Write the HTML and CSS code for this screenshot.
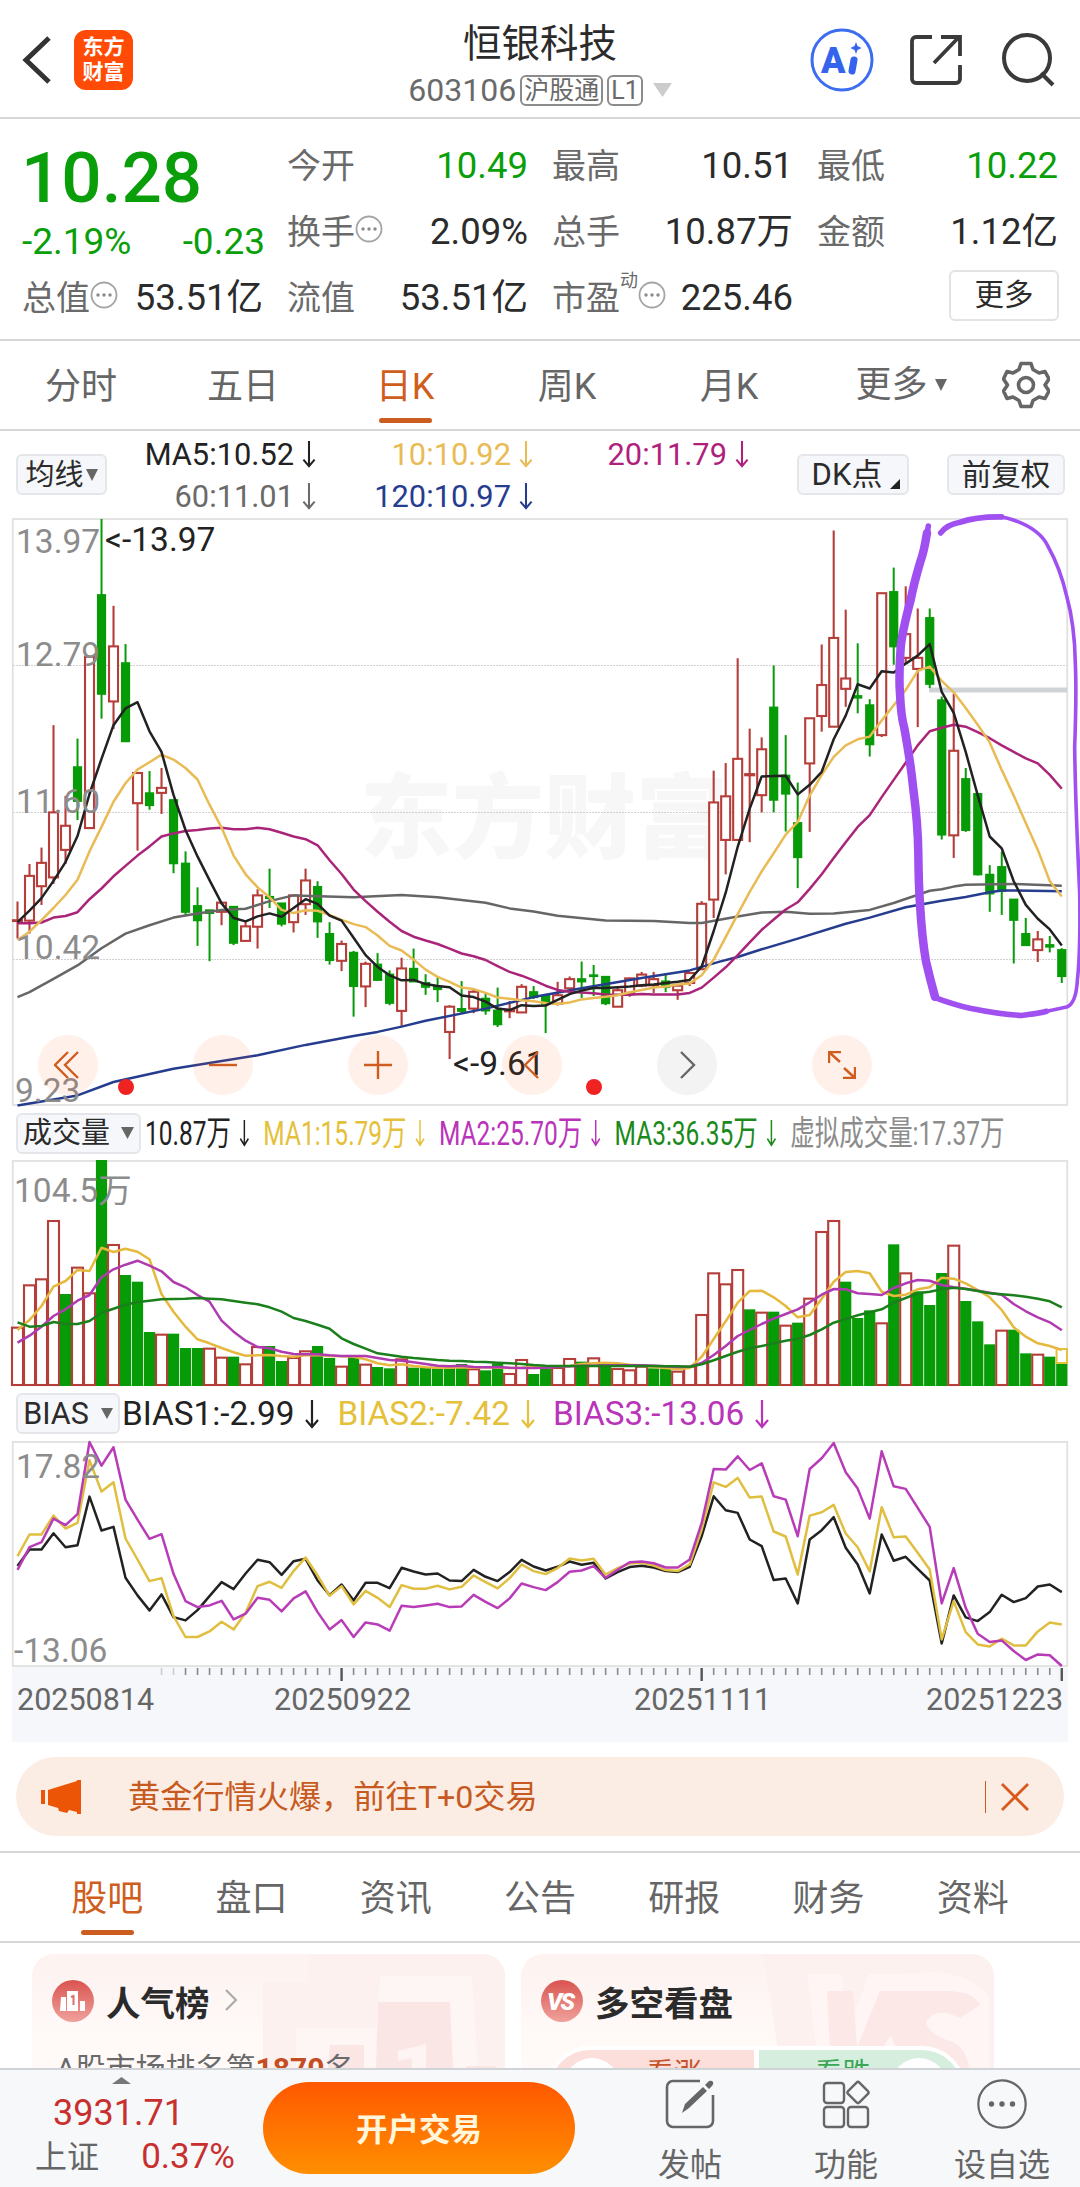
FILE: index.html
```html
<!DOCTYPE html>
<html lang="zh-CN">
<head>
    <meta charset="UTF-8">
    <meta name="viewport" content="width=device-width, initial-scale=1.0">
    <title>恒银科技 603106</title>
    <link rel="stylesheet" href="styles.css">
</head>
<body>
    <svg class="sprite" width="0" height="0">
        <symbol id="down" viewBox="0 0 14 30"><path d="M7 1v27M1 21l6 7 6-7" fill="none" stroke="currentColor" stroke-width="2.2"/></symbol>
        <symbol id="tri" viewBox="0 0 14 12" preserveAspectRatio="none"><path d="M0 0h14L7 12z" fill="currentColor"/></symbol>
        <symbol id="dots" viewBox="0 0 28 28">
            <circle cx="14" cy="14" r="12.5" fill="none" stroke="#a5a5a5" stroke-width="1.8"/>
            <g fill="#8a8a8a"><circle cx="8" cy="14" r="1.7"/><circle cx="14" cy="14" r="1.7"/><circle cx="20" cy="14" r="1.7"/></g>
        </symbol>
    </svg>

    <header class="header">
        <div class="header-left">
            <svg class="back" width="30" height="50" viewBox="0 0 30 50"><path d="M27 3L4 25l23 22" fill="none" stroke="#333" stroke-width="5"/></svg>
            <div class="logo"><span>东方</span><span>财富</span></div>
        </div>
        <div class="stock">
            <div class="stock-name">恒银科技</div>
            <div class="stock-code">603106<span class="tag">沪股通</span><span class="tag">L1</span><svg class="code-tri" width="19" height="14"><use href="#tri"/></svg></div>
        </div>
        <div class="header-right">
            <svg class="ai-icon" width="64" height="64" viewBox="0 0 64 64">
                <circle cx="32" cy="32" r="30" fill="#fff" stroke="#3c6cf0" stroke-width="3"/>
                <text class="ai" x="11" y="45">A</text>
                <path d="M44 32l-2 11" stroke="#3563ee" stroke-width="7" stroke-linecap="round"/>
                <path d="M46 14l1.500 4 4 2-4 2-1.500 4-1.500-4-4-2 4-2z" fill="#3563ee"/>
            </svg>
            <svg width="52" height="52" viewBox="0 0 52 52" fill="none" stroke="#3a3a3a" stroke-width="3.800">
                <path d="M22 3H6a4 4 0 0 0-4 4v38a4 4 0 0 0 4 4h40a4 4 0 0 0 4-4V31"/>
                <path d="M24 29L49 3M31 3h19v19"/>
            </svg>
            <svg width="54" height="54" viewBox="0 0 54 54" fill="none" stroke="#3a3a3a" stroke-width="4">
                <circle cx="26" cy="25" r="23"/><path d="M40 40l12 12"/>
            </svg>
        </div>
    </header>

    <section class="quote">
        <div class="price-box">
            <div class="price">10.28</div>
            <div class="change"><span>-2.19%</span><span>-0.23</span></div>
        </div>
        <div class="item"><span class="label">今开</span><span class="value green">10.49</span></div>
        <div class="item"><span class="label">最高</span><span class="value">10.51</span></div>
        <div class="item"><span class="label">最低</span><span class="value green">10.22</span></div>
        <div class="item"><span class="label">换手<svg class="info" width="28" height="28"><use href="#dots"/></svg></span><span class="value">2.09%</span></div>
        <div class="item"><span class="label">总手</span><span class="value">10.87万</span></div>
        <div class="item"><span class="label">金额</span><span class="value">1.12亿</span></div>
        <div class="item"><span class="label">总值<svg class="info" width="28" height="28"><use href="#dots"/></svg></span><span class="value">53.51亿</span></div>
        <div class="item"><span class="label">流值</span><span class="value">53.51亿</span></div>
        <div class="item"><span class="label">市盈<sup>动</sup><svg class="info" width="28" height="28"><use href="#dots"/></svg></span><span class="value">225.46</span></div>
        <div class="item end"><button class="more">更多</button></div>
    </section>

    <nav class="period">
        <span>分时</span>
        <span>五日</span>
        <span class="active">日K</span>
        <span>周K</span>
        <span>月K</span>
        <span class="period-more">更多<svg width="12" height="12"><use href="#tri"/></svg></span>
        <svg class="gear" width="48" height="48" viewBox="0 0 48 48" fill="none" stroke="#666" stroke-width="3.600" stroke-linejoin="round">
            <path d="M19 2.500h10l2 6 6 3.500 6-1.500 4 7.500-4 6 4 6-4 7.500-6-1.500-6 3.500-2 6H19l-2-6-6-3.500-6 1.500L1.500 30l4-6-4-6L5 10.500l6 1.500 6-3.500z"/>
            <circle cx="24" cy="24" r="7.500"/>
        </svg>
    </nav>

    <div class="ma-bar">
        <button class="chip">均线<svg width="12" height="12"><use href="#tri"/></svg></button>
        <div class="ma-grid">
            <span class="c-black">MA5:10.52<svg class="arrow"><use href="#down"/></svg></span>
            <span class="c-gold">10:10.92<svg class="arrow"><use href="#down"/></svg></span>
            <span class="c-rose">20:11.79<svg class="arrow"><use href="#down"/></svg></span>
            <span class="c-gray">60:11.01<svg class="arrow"><use href="#down"/></svg></span>
            <span class="c-blue">120:10.97<svg class="arrow"><use href="#down"/></svg></span>
        </div>
        <button class="chip chip-dk">DK点<svg width="10" height="10" viewBox="0 0 10 10"><path d="M10 0v10H0z" fill="#222"/></svg></button>
        <button class="chip chip-fq">前复权</button>
    </div>

    <div class="k-chart">
        <svg class="chart" width="1080" height="588" viewBox="0 0 1080 588">
            <text class="watermark" x="360" y="333">东方财富</text>
            <g class="grid">
                <path d="M13 147.500H1067M13 294.500H1067M13 441.500H1067"/>
            </g>
            <rect class="frame" x="12.750" y="1" width="1054.500" height="586"/>
            <rect x="929" y="169.500" width="138" height="5" fill="#cfd3d5"/>
            <g id="candles"></g>
            <g class="axis">
                <text x="16" y="35">13.97</text>
                <text x="16" y="148">12.79</text>
                <text x="16" y="295">11.60</text>
                <text x="16" y="441">10.42</text>
                <text x="15" y="584">9.23</text>
            </g>
            <text class="mark" x="105" y="33">&lt;-13.97</text>
            <text class="mark" x="453" y="557">&lt;-9.61</text>
            <circle cx="126" cy="569" r="8" fill="#f02323"/>
            <circle cx="594" cy="569" r="8" fill="#f02323"/>
            <!-- hand-drawn circle around the latest drop -->
            <g class="pen" transform="translate(700 -8) scale(.33333 .38266)">
                <path class="pen-thick" d="M681 60Q672 110 661 135Q642 190 632 235Q606 320 602 360Q596 440 600 480Q603 540 613 570Q632 660 640 730Q654 820 655 900Q656 980 660 1030Q666 1120 678 1180Q690 1225 705 1272"/>
                <path class="pen-mid" d="M685 42L676 90M705 1274Q760 1292 810 1302Q900 1318 965 1321Q1020 1315 1040 1310M722 60Q740 38 780 32Q830 17 905 18"/>
                <path class="pen-thin" d="M1030 1312L1100 1299Q1128 1290 1132 1230Q1142 1150 1139 1000Q1126 760 1124 620Q1130 480 1126 400Q1124 300 1100 225Q1080 150 1044 95Q1020 50 940 26Q920 20 900 18"/>
            </g>
        </svg>
        <div class="tools">
            <i class="tool"><svg width="28" height="28" viewBox="0 0 28 28"><path d="M14 1L1 14l13 13M24 1L11 14l13 13"/></svg></i>
            <i class="tool"><svg width="28" height="28" viewBox="0 0 28 28"><path d="M0 14h28"/></svg></i>
            <i class="tool"><svg width="28" height="28" viewBox="0 0 28 28"><path d="M0 14h28M14 0v28"/></svg></i>
            <i class="tool"><svg width="28" height="28" viewBox="0 0 28 28"><path d="M20 1L7 14l13 13"/></svg></i>
            <i class="tool gray"><svg width="28" height="28" viewBox="0 0 28 28"><path d="M8 1l13 13L8 27"/></svg></i>
            <i class="tool"><svg width="28" height="28" viewBox="0 0 28 28"><path d="M1 12V1h12M1 1l11 10M27 16v11H15M27 27L16 17"/></svg></i>
        </div>
    </div>

    <div class="legend">
        <button class="chip chip-vol">成交量<svg width="13" height="12"><use href="#tri"/></svg></button>
        <div class="legend-vol">
            <span class="c-black">10.87万<svg class="arrow"><use href="#down"/></svg></span>
            <span class="c-yellow">MA1:15.79万<svg class="arrow"><use href="#down"/></svg></span>
            <span class="c-purple">MA2:25.70万<svg class="arrow"><use href="#down"/></svg></span>
            <span class="c-green">MA3:36.35万<svg class="arrow"><use href="#down"/></svg></span>
            <span class="c-light">虚拟成交量:17.37万</span>
        </div>
    </div>

    <svg class="chart" width="1080" height="226" viewBox="0 0 1080 226">
        <rect class="frame" x="12.750" y="1" width="1054.500" height="224"/>
        <g id="volume"></g>
        <g class="axis"><text x="14" y="42">104.5万</text></g>
    </svg>

    <div class="legend legend-b">
        <button class="chip chip-bias">BIAS<svg width="12" height="11"><use href="#tri"/></svg></button>
        <div class="legend-bias">
            <span class="c-black">BIAS1:-2.99<svg class="arrow"><use href="#down"/></svg></span>
            <span class="c-yellow">BIAS2:-7.42<svg class="arrow"><use href="#down"/></svg></span>
            <span class="c-purple">BIAS3:-13.06<svg class="arrow"><use href="#down"/></svg></span>
        </div>
    </div>

    <svg class="chart" width="1080" height="226" viewBox="0 0 1080 226">
        <rect class="frame" x="12.750" y="1" width="1054.500" height="224"/>
        <g id="bias"></g>
        <g class="axis">
            <text x="16" y="37">17.82</text>
            <text x="14" y="221">-13.06</text>
        </g>
    </svg>

    <div class="dates">
        <svg id="ticks" width="1056" height="14" viewBox="12 0 1056 14"></svg>
        <div class="date-row">
            <span>20250814</span><span>20250922</span><span>20251111</span><span>20251223</span>
        </div>
    </div>

    <div class="banner">
        <svg width="42" height="36" viewBox="0 0 42 36"><path d="M1 11h4v14H1zM8 11L37 2V1h4v34h-4v-2l-8-2-2 3-8-2-1-3-10-3z" fill="#eb5505"/></svg>
        <span class="banner-text">黄金行情火爆，前往T+0交易</span>
        <i class="banner-line"></i>
        <svg width="30" height="30" viewBox="0 0 30 30"><path d="M2 2l26 26M28 2L2 28" stroke="#d9591b" stroke-width="2.800"/></svg>
    </div>

    <nav class="tabs">
        <span class="active">股吧</span>
        <span>盘口</span>
        <span>资讯</span>
        <span>公告</span>
        <span>研报</span>
        <span>财务</span>
        <span>资料</span>
    </nav>

    <div class="cards">
        <div class="card">
            <svg class="card-bg" width="473" height="114" viewBox="0 0 473 114">
                <path d="M276 0H473V114H231V28h44z" fill="#fdf1ef"/>
                <path d="M264 74h80l4-52h92l6 92H264z" fill="#fef6f4"/>
                <path d="M298 91h34v23h-36zM346 48h72l3 66h-77zM434 112h30v2h-30z" fill="#fae6e5"/>
                <path d="M366 97l28-7v24h-14v-10l-14 3z" fill="#fef4f3"/>
            </svg>
            <div class="card-head">
                <svg width="42" height="42" viewBox="0 0 42 42">
                    <defs><linearGradient id="red" x1="0" y1="0" x2="0" y2="1"><stop offset="0" stop-color="#d9544f"/><stop offset="1" stop-color="#f0a19c"/></linearGradient></defs>
                    <circle cx="21" cy="21" r="21" fill="url(#red)"/>
                    <path d="M9 17h5v14H8zM15 11h11v20H15zM28 21h5v10h-5z" fill="#fff"/>
                    <path d="M19 17l2.500-1v9" fill="none" stroke="#d9726d" stroke-width="2"/>
                </svg>
                <b>人气榜</b>
                <svg class="card-more" width="12" height="22" viewBox="0 0 12 22"><path d="M1 1l10 10L1 21" fill="none" stroke="#aaa" stroke-width="2.200"/></svg>
            </div>
            <div class="rank">A股市场排名第<b>1870</b>名</div>
        </div>
        <div class="card">
            <svg class="card-bg" width="473" height="114" viewBox="0 0 473 114">
                <path d="M242 0H473V114H260z" fill="#fdf1f0"/>
                <path d="M286 20h34l8 55 20-55h42q50-8 78 22v72H298z" fill="#fef5f4"/>
                <path d="M306 37h26l4 57 23-57h66q28 0 34 14l-20 13q-24-12-34 4 2 12 26 20 14 6 17 26h-66l-12-33-22 33h-38z" fill="#fbe8e7"/>
            </svg>
            <div class="card-head">
                <svg width="42" height="42" viewBox="0 0 42 42">
                    <circle cx="21" cy="21" r="21" fill="url(#red)"/>
                    <text class="vs" x="6" y="30">VS</text>
                </svg>
                <b>多空看盘</b>
            </div>
            <div class="vote">
                <div class="vote-up"><i></i><span>看涨</span></div>
                <div class="vote-down"><span>看跌</span><i></i></div>
            </div>
        </div>
    </div>

    <footer class="footer">
        <div class="index">
            <svg class="index-up" width="19" height="7"><path d="M0 7L9.500 0 19 7z" fill="#777"/></svg>
            <div class="index-value">3931.71</div>
            <div class="index-row"><span>上证</span><span class="red">0.37%</span></div>
        </div>
        <button class="open-btn">开户交易</button>
        <div class="action">
            <svg width="50" height="50" viewBox="0 0 50 50" fill="none" stroke="#666" stroke-width="2.600">
                <path d="M35 2H8a6 6 0 0 0-6 6v34a6 6 0 0 0 6 6h34a6 6 0 0 0 6-6V16"/>
                <path d="M17 34l3-9L38 8l4 4-18 17zM40 6l4-4q3-1 4 1t-1 4l-3 3z" fill="#666" stroke="none"/>
            </svg>
            <span>发帖</span>
        </div>
        <div class="action action-fn">
            <svg width="50" height="50" viewBox="0 0 50 50" fill="none" stroke="#666" stroke-width="2.400">
                <rect x="3" y="4" width="20" height="20" rx="3"/><rect x="3" y="28" width="20" height="20" rx="3"/><rect x="27" y="28" width="20" height="20" rx="3"/>
                <rect x="29" y="5.500" width="16" height="16" rx="2" transform="rotate(45 37 13.500)"/>
            </svg>
            <span>功能</span>
        </div>
        <div class="action action-add">
            <svg width="50" height="50" viewBox="0 0 50 50">
                <circle cx="25" cy="25" r="23.700" fill="none" stroke="#666" stroke-width="2.200"/>
                <g fill="#666"><circle cx="14.500" cy="25" r="2.700"/><circle cx="25" cy="25" r="2.700"/><circle cx="35.500" cy="25" r="2.700"/></g>
            </svg>
            <span>设自选</span>
        </div>
    </footer>

    <script src="chart.js"></script>
</body>
</html>
```

FILE: styles.css
```css
body {
    width: 1080px;
    height: 2187px;
    margin: 0;
    overflow: hidden;
    display: flex;
    flex-direction: column;
    background: #fff;
    color: #2b2b2b;
    font-family: Roboto, "Noto Sans CJK SC", sans-serif;
}

body > * {
    flex-shrink: 0;
    box-sizing: border-box;
}

svg {
    display: block;
    flex-shrink: 0;
}

button {
    font-family: inherit;
    padding: 0;
    color: #2b2b2b;
    white-space: nowrap;
}

.sprite {
    position: absolute;
}

.green {
    color: #0a9f0a;
}

.red {
    color: #c8302f;
}

/* header */
.header {
    height: 119px;
    display: grid;
    grid-template-columns: 290px 1fr 290px;
    border-bottom: 2px solid #d6d6d6;
}

.header-left {
    display: flex;
    align-items: center;
    gap: 22px;
    padding: 3px 0 0 22px;
}

.logo {
    display: flex;
    flex-direction: column;
    justify-content: center;
    align-items: center;
    width: 59px;
    height: 60px;
    border-radius: 12px;
    background: #ff4b05;
    color: #fff;
    font-size: 21px;
    line-height: 25px;
    font-weight: bold;
}

.stock {
    display: flex;
    flex-direction: column;
    align-items: center;
    padding-top: 21px;
}

.stock-name {
    font-size: 38.5px;
    line-height: 46px;
}

.stock-code {
    display: flex;
    align-items: center;
    height: 46px;
    font-size: 32px;
    color: #6a6a6a;
}

.tag {
    margin-left: 4px;
    padding: 0 2px;
    border: 2px solid #8c8c8c;
    border-radius: 6px;
    font-size: 25px;
    line-height: 27px;
}

.code-tri {
    margin-left: 10px;
    color: #ccc;
}

.header-right {
    display: flex;
    align-items: center;
    justify-content: flex-end;
    gap: 39px;
    padding: 3px 25px 0 0;
}

.ai-icon {
    margin-right: -3px;
}

.ai {
    font-size: 36px;
    font-weight: 900;
    fill: #3563ee;
}

/* quote */
.quote {
    height: 222px;
    display: grid;
    grid-template-columns: repeat(4, 241px);
    grid-template-rows: repeat(3, 66px);
    column-gap: 24px;
    padding: 14px 22px 0;
    border-bottom: 2px solid #d6d6d6;
    font-size: 36.5px;
    line-height: 44px;
}

.price-box {
    grid-row: span 2;
    color: #0a9f0a;
}

.price {
    margin: 9px 0 0 -1px;
    font-size: 71px;
    line-height: 72px;
    font-weight: 500;
}

.change {
    display: flex;
    justify-content: space-between;
    margin: 6px -2px 0 0;
    font-size: 37px;
    line-height: 44px;
}

.item {
    display: flex;
    align-items: center;
    justify-content: space-between;
    white-space: nowrap;
}

.label {
    display: flex;
    align-items: center;
    font-size: 34px;
    color: #6a6a6a;
}

.label sup {
    font-size: 18px;
    line-height: 18px;
    margin-bottom: 34px;
}

.info {
    margin-top: -6px;
}

.end {
    justify-content: flex-end;
}

.more {
    width: 110px;
    height: 51px;
    margin: -6px -1px 0 0;
    border: 2px solid #e3e3e3;
    border-radius: 6px;
    background: #fff;
    font-size: 29.5px;
    line-height: 44px;
}

/* period tabs */
.period {
    height: 90px;
    display: flex;
    align-items: center;
    border-bottom: 2px solid #d6d6d6;
    font-size: 36px;
    color: #666;
}

.period span {
    position: relative;
    width: 162px;
    height: 88px;
    text-align: center;
    line-height: 93px;
}

.period .period-more {
    display: flex;
    align-items: center;
    justify-content: center;
    gap: 7px;
    padding-left: 12px;
    width: 158px;
}

.active {
    color: #d05d20;
}

.active::after {
    content: "";
    position: absolute;
    left: 50%;
    bottom: 6px;
    width: 53px;
    height: 5px;
    margin-left: -26px;
    border-radius: 3px;
    background: #cc5d20;
}

.gear {
    margin-left: 22px;
}

/* indicator bars */
.chip {
    box-sizing: border-box;
    flex-shrink: 0;
    display: flex;
    align-items: center;
    justify-content: center;
    height: 41px;
    border: 2px solid #e4e6ea;
    border-radius: 6px;
    background: #f6f7fa;
    font-size: 29px;
    line-height: 36px;
}

.chip svg {
    color: #666;
}

.arrow {
    width: 14px;
    height: 28px;
}

.ma-bar {
    height: 87px;
    display: flex;
    align-items: center;
    padding-left: 16px;
}

.ma-bar .chip {
    width: 91px;
    gap: 2px;
}

.ma-grid {
    display: grid;
    grid-template-columns: 209px 217px 216px;
    grid-template-rows: 42px 42px;
    margin-top: 1px;
    font-size: 30.8px;
}

.ma-grid span {
    display: flex;
    align-items: center;
    justify-content: flex-end;
    gap: 8px;
}

.ma-bar .chip-dk {
    width: 112px;
    margin-left: 48px;
    padding-left: 6px;
    gap: 8px;
    font-size: 31px;
}

.chip-dk svg {
    margin-top: 18px;
}

.ma-bar .chip-fq {
    width: 118px;
    margin-left: 38px;
    font-size: 29.5px;
}

.c-black { color: #222; }
.c-gold { color: #e9bb55; }
.c-rose { color: #b01f7c; }
.c-gray { color: #6a6a6a; }
.c-blue { color: #263c8f; }
.c-yellow { color: #e5c03a; }
.c-purple { color: #b934b9; }
.c-green { color: #1b8a1b; }
.c-light { color: #8c8c8c; }

/* charts */
.k-chart {
    position: relative;
}

.chart {
    overflow: visible;
}

.frame {
    fill: none;
    stroke: #e0e0e0;
    stroke-width: 1.8;
}

.grid path {
    stroke: #d0d0d0;
    stroke-width: 1;
    stroke-dasharray: 2 1;
}

.watermark {
    font-size: 92px;
    font-weight: 900;
    fill: #f7f7f7;
}

.axis text {
    font-size: 33.5px;
    fill: #8c8c8c;
}

.mark {
    font-size: 33.5px;
    fill: #222;
}

.up {
    fill: #fff;
    stroke: #b53e3a;
    stroke-width: 2.1;
}

.down {
    fill: #079b07;
    stroke: #079b07;
    stroke-width: 2;
}

.line {
    fill: none;
    stroke-width: 2.5;
    stroke-linejoin: round;
}

.pen path {
    fill: none;
    stroke: #a050f0;
    stroke-linecap: round;
    stroke-linejoin: round;
    vector-effect: non-scaling-stroke;
}

.pen .pen-thick { stroke-width: 8.5; }
.pen .pen-mid { stroke-width: 5.6; }
.pen .pen-thin { stroke-width: 3.6; }

.tools {
    position: absolute;
    left: 38px;
    top: 517px;
    display: flex;
    gap: 94.8px;
}

.tool {
    display: flex;
    align-items: center;
    justify-content: center;
    width: 60px;
    height: 60px;
    border-radius: 50%;
    background: rgba(255, 90, 10, 0.085);
}

.tool path {
    fill: none;
    stroke: #d05d20;
    stroke-width: 2.4;
}

.tool.gray {
    background: #f3f3f3;
}

.tool.gray path {
    stroke: #666;
}

.legend {
    height: 54px;
    display: flex;
    align-items: center;
    padding: 0 0 0 16px;
}

.chip-vol {
    width: 125px;
    gap: 11px;
}

.legend-vol {
    display: flex;
    gap: 15px;
    margin-left: 4px;
    font-size: 34px;
    line-height: 40px;
    transform: scaleX(0.72);
    transform-origin: left;
    white-space: nowrap;
}

.legend-vol span,
.legend-bias span {
    display: flex;
    align-items: center;
}

.legend-vol .arrow {
    width: 18px;
    margin: 0 2px 0 10px;
}

.legend-b {
    height: 55px;
}

.chip-bias {
    width: 104px;
    gap: 12px;
    font-size: 30.5px;
}

.legend-bias {
    display: flex;
    gap: 18px;
    margin-left: 2px;
    font-size: 33.3px;
    white-space: nowrap;
}

.legend-bias .arrow {
    height: 30px;
    margin: 0 0 0 11px;
}

.dates {
    width: 1056px;
    height: 75px;
    margin: 0 12px;
    background: #f6f7fa;
}

.date-row {
    display: flex;
    padding: 0 0 0 5px;
    font-size: 30.5px;
    line-height: 37px;
    color: #666;
}

.date-row span {
    width: 257px;
}

.date-row span:nth-child(2) {
    width: 360px;
}

.date-row span:nth-child(3) {
    width: 292px;
}

.date-row span:last-child {
    width: auto;
}

/* banner */
.banner {
    height: 79px;
    display: flex;
    align-items: center;
    margin: 15px 16px 15px;
    padding: 0 34px 0 24px;
    border-radius: 40px;
    background: #fcede4;
    color: #c65a20;
    font-size: 32.2px;
    line-height: 40px;
}

.banner-text {
    flex: 1;
    margin-left: 46px;
}

.banner-line {
    width: 1px;
    height: 32px;
    margin-right: 14px;
    background: #c65a20;
}

.tabs {
    height: 92px;
    display: flex;
    padding: 0 35px;
    border-top: 2px solid #d6d6d6;
    border-bottom: 2px solid #d6d6d6;
    font-size: 36px;
    line-height: 92px;
    color: #666;
}

.tabs span {
    position: relative;
    flex: 1;
    text-align: center;
}

/* cards */
.cards {
    height: 125px;
    display: flex;
    gap: 16px;
    padding: 11px 32px 0;
    overflow: hidden;
}

.card {
    position: relative;
    width: 473px;
    height: 200px;
    border-radius: 22px;
    overflow: hidden;
    background: linear-gradient(#fdf3f1, #fffaf8 50%);
}

.card-bg {
    position: absolute;
    left: 0;
    top: 0;
}

.card-head {
    position: relative;
    display: flex;
    align-items: center;
    gap: 12px;
    height: 56px;
    padding: 19px 0 0 20px;
    font-size: 34.5px;
}

.card-more {
    margin: -2px 0 0 3px;
}

.vs {
    font-size: 24px;
    font-weight: 900;
    font-style: italic;
    letter-spacing: -2px;
    fill: #fff;
}

.rank {
    position: relative;
    padding: 18px 0 0 24px;
    font-size: 30px;
    line-height: 44px;
    color: #6a6a6a;
}

.rank b {
    color: #c44d22;
}

.vote {
    position: relative;
    display: flex;
    gap: 5px;
    width: 412px;
    height: 80px;
    margin: 17px 0 0 25px;
    border: 4px solid #fff;
    border-radius: 44px;
    overflow: hidden;
    background: #fff;
    font-size: 28px;
    line-height: 48px;
}

.vote div {
    display: flex;
    flex: 1;
}

.vote i {
    width: 56px;
    height: 56px;
    margin: 8px 14px 0;
    border-radius: 50%;
    background: #fff;
}

.vote-up {
    background: #fcdedb;
    color: #c4532a;
}

.vote-up span {
    margin-left: 12px;
}

.vote-down {
    background: #d6eedd;
    color: #3aa656;
}

.vote-down span {
    margin: 0 6px 0 56px;
}

/* footer */
.footer {
    height: 119px;
    display: flex;
    border-top: 2px solid #d0d4d8;
    background: #f6f8fa;
}

.index {
    width: 263px;
    font-size: 36px;
}

.index-up {
    margin: 7px 0 0 112px;
}

.index-value {
    margin: 7px 0 0 53px;
    line-height: 44px;
    color: #c8302f;
}

.index-row {
    display: flex;
    align-items: center;
    justify-content: space-between;
    padding: 0 28px 0 35px;
    line-height: 44px;
    color: #666;
    font-size: 32px;
}

.index-row .red {
    font-size: 35px;
}

.open-btn {
    width: 312px;
    height: 92px;
    margin-top: 12px;
    border: none;
    border-radius: 46px;
    background: linear-gradient(#ff5800, #ff8f00);
    color: #fff6dc;
    font-size: 31.5px;
    font-weight: bold;
    line-height: 40px;
    padding-top: 6px;
}

.action {
    display: flex;
    flex-direction: column;
    align-items: center;
    width: 64px;
    margin-left: 83px;
    padding-top: 9px;
    font-size: 32px;
    line-height: 46px;
    color: #666;
    white-space: nowrap;
}

.action span {
    margin-top: 13px;
}

.action-fn {
    margin-left: 92px;
}

.action-add {
    width: 96px;
    margin-left: 76px;
}
```

FILE: chart.js
```js
var NS = 'http://www.w3.org/2000/svg';
var STEP = 12.003;
var START = 17.5;

function x(i) {
    return START + STEP * i;
}

function add(parent, tag, attrs) {
    var el = document.createElementNS(NS, tag);
    for (var k in attrs) el.setAttribute(k, attrs[k]);
    parent.appendChild(el);
    return el;
}

// scale a level between the top and bottom of a pane to pixels
function scale(top, bottom, height) {
    return function (v) {
        return 1 + (v - top) / (bottom - top) * height;
    };
}

function line(parent, data, y, color) {
    var pts = data.map(function (d, i) {
        return Array.isArray(d) ? x(d[0]).toFixed(1) + ',' + y(d[1]).toFixed(1)
                                : x(i).toFixed(1) + ',' + y(d).toFixed(1);
    });
    add(parent, 'polyline', { points: pts.join(' '), stroke: color, 'class': 'line' });
}

// [up, high, body top, body bottom, low]
var candles = [
    [1,1023,1072,1074,1120],[1,925,956,1073,1107],[1,882,922,983,1032],[1,562,790,960,977],[1,747,825,888,925],
    [0,597,672,760,810],[1,383,383,831,831],[0,23,222,480,545],[1,250,356,500,572],[0,350,400,604,604],
    [1,687,687,766,890],[0,682,740,771,783],[1,674,726,739,794],[0,758,758,923,949],[0,892,924,1050,1060],
    [0,986,1035,1072,1139],[0,1045,1046,1053,1179],[1,1026,1026,1050,1085],[0,1037,1037,1131,1137],[1,1075,1088,1126,1126],
    [1,991,1007,1089,1146],[0,937,1011,1014,1040],[0,1028,1028,1081,1088],[1,1007,1007,1077,1104],[1,937,968,1030,1058],
    [0,970,985,1075,1118],[0,1077,1108,1176,1188],[1,1125,1134,1178,1205],[0,1152,1157,1244,1324],[1,1180,1186,1245,1299],
    [0,1158,1188,1228,1228],[0,1203,1214,1288,1294],[1,1170,1198,1309,1348],[0,1146,1199,1232,1232],[0,1213,1236,1246,1267],
    [0,1220,1246,1252,1286],[1,1294,1298,1364,1435],[0,1231,1304,1309,1316],[1,1252,1259,1303,1315],[0,1260,1277,1308,1319],
    [0,1248,1308,1344,1351],[1,1283,1306,1310,1328],[1,1239,1246,1313,1313],[0,1244,1260,1273,1278],[0,1270,1270,1290,1367],
    [1,1233,1268,1290,1295],[1,1219,1226,1250,1262],[0,1180,1226,1232,1275],[0,1189,1216,1218,1270],[0,1220,1220,1289,1294],
    [1,1246,1255,1298,1298],[1,1222,1224,1262,1272],[1,1207,1214,1243,1247],[1,1207,1226,1242,1262],[0,1213,1232,1246,1260],
    [1,1238,1243,1255,1280],[1,1210,1210,1236,1244],[1,1022,1029,1200,1200],[1,681,764,1018,1066],[1,661,748,862,952],
    [1,387,650,862,862],[1,571,690,693,868],[1,594,625,745,790],[0,406,516,757,790],[0,588,694,741,840],
    [0,712,818,907,988],[1,544,544,662,841],[1,351,457,538,579],[1,53,334,566,566],[1,260,440,467,514],
    [0,348,486,490,531],[0,494,510,612,644],[1,217,217,588,593],[0,150,214,356,404],[1,199,324,386,400],
    [1,257,386,415,567],[0,257,282,454,465],[0,487,497,848,861],[1,480,629,850,909],[0,674,703,836,841],
    [0,742,742,952,955],[0,928,953,1002,1050],[0,893,933,995,1058],[0,1018,1018,1071,1185],[0,1066,1108,1137,1139],
    [1,1100,1122,1150,1181],[0,1113,1137,1141,1156],[0,1145,1150,1218,1236]
];

var ma5 = [1077,1047,1014,969,920,852,742,650,562,518,502,578,632,744,836,905,967,1028,1066,1075,1062,1054,1063,1040,1017,1029,1060,1073,1118,1163,1194,1216,1229,1228,1239,1244,1247,1269,1273,1285,1303,1307,1294,1296,1295,1280,1265,1256,1249,1249,1247,1245,1242,1240,1236,1233,1228,1193,1100,1000,880,780,696,695,694,743,718,684,599,537,455,466,421,424,401,380,350,475,530,632,745,853,884,970,1032,1068,1096,1138];
var ma10 = [1124,1102,1072,1040,1006,966,892,828,762,714,678,659,639,652,674,704,770,830,903,952,986,1012,1045,1053,1046,1047,1058,1071,1082,1090,1112,1139,1151,1175,1201,1220,1233,1248,1252,1262,1274,1277,1281,1284,1288,1291,1287,1279,1275,1272,1268,1260,1254,1248,1245,1240,1237,1216,1175,1116,1056,998,944,897,848,815,746,692,645,615,599,592,550,510,470,420,409,446,476,517,561,607,679,746,818,888,970,1010];
var ma20 = [1080,1080,1078,1065,1061,1051,1017,989,957,930,903,879,853,845,839,836,832,830,834,834,830,834,843,853,860,876,915,951,992,1022,1050,1076,1100,1115,1125,1134,1146,1159,1166,1176,1192,1207,1217,1229,1243,1254,1259,1261,1263,1266,1267,1267,1265,1266,1266,1266,1262,1248,1222,1195,1163,1130,1097,1070,1044,1025,990,952,909,868,828,797,750,705,660,615,578,569,561,566,580,596,615,632,649,662,692,728];
var ma60 = [[0,1273],[1,1260],[3,1225],[5,1190],[7,1145],[9,1107],[11,1085],[13,1065],[15,1054],[17,1045],[19,1042],[21,1022],[23,1007],[28,1012],[32,1006],[35,1012],[39,1026],[41,1041],[43,1049],[45,1060],[49,1073],[53,1074],[56,1079],[57,1079],[60,1062],[62,1052],[64,1050],[66,1055],[68,1054],[71,1045],[73,1027],[76,995],[77,991],[78,984],[79,979],[83,977],[87,982]];
var ma120 = [[0,1556],[5,1530],[8,1495],[13,1460],[20,1425],[24,1398],[28,1375],[30,1364],[32,1350],[34,1335],[39,1303],[43,1273],[47,1250],[52,1223],[56,1203],[58.5,1180],[60,1168],[62,1148],[65,1120],[69,1081],[71,1065],[74,1038],[77,1021],[79,1011],[81,999],[82,994],[87,996]];

var kPane = document.getElementById('candles');
var ky = scale(23, 1555, 586);
candles.forEach(function (c, i) {
    var cx = x(i), cls = c[0] ? 'up' : 'down';
    var w = c[0] ? 9 : 7.2;
    add(kPane, 'path', { d: 'M' + cx + ' ' + ky(c[1]) + 'V' + ky(c[4]), 'class': cls });
    add(kPane, 'rect', { x: cx - w / 2, y: ky(c[2]), width: w, height: Math.max(ky(c[3]) - ky(c[2]), 0.5), 'class': cls });
});
line(kPane, ma60, ky, '#666');
line(kPane, ma120, ky, '#263c8f');
line(kPane, ma20, ky, '#aa2579');
line(kPane, ma10, ky, '#e9bb55');
line(kPane, ma5, ky, '#222');

// volume
var vol = [683,556,538,363,585,503,580,183,435,528,548,699,704,704,747,747,746,773,773,793,741,741,786,774,754,741,777,800,773,794,804,808,778,806,806,808,802,795,808,814,793,822,780,825,808,804,777,788,775,790,807,811,800,808,808,815,800,645,520,553,510,631,638,638,677,671,596,396,363,548,657,634,670,436,520,577,618,522,437,606,667,736,692,692,763,764,773,789];
var volUp = [0,1,2,3,5,6,8,12,16,17,19,20,23,24,27,29,32,38,41,42,45,46,48,50,51,52,55,56,57,58,59,60,62,64,66,67,68,72,74,78,82,85];
var v1 = [690,660,618,560,543,510,513,443,456,446,455,478,582,635,680,718,730,744,757,767,766,765,768,770,766,765,768,769,770,778,790,796,793,798,802,803,803,802,803,802,803,804,803,800,801,800,798,792,790,788,790,794,796,801,804,808,804,770,717,664,608,573,572,592,618,652,645,596,545,516,513,520,575,588,584,568,562,533,536,550,570,592,630,682,710,730,738,750];
var v2 = [728,707,680,648,628,602,585,532,508,494,482,497,514,546,562,585,605,662,695,722,741,745,755,762,763,763,766,768,768,768,774,780,782,787,792,797,799,797,801,802,801,803,804,804,803,800,799,797,797,796,796,796,796,797,799,801,800,789,765,738,708,690,672,656,642,628,607,584,567,568,580,582,585,564,550,540,542,555,562,566,572,578,584,612,634,652,667,691];
var v3 = [667,680,678,666,672,672,663,638,626,614,606,602,598,597,596,594,596,598,603,608,613,622,635,654,663,674,686,715,732,746,760,765,770,774,777,780,782,783,785,786,788,790,792,795,797,798,798,798,798,798,798,798,798,798,799,799,800,793,781,768,755,745,738,730,722,716,705,688,668,657,646,637,628,608,594,580,575,568,563,567,573,580,583,586,590,596,604,622];

var vPane = document.getElementById('volume');
var vy = scale(183, 855, 224);
vol.forEach(function (v, i) {
    var up = volUp.indexOf(i) > -1, w = up ? 11 : 9.2;
    add(vPane, 'rect', { x: x(i) - w / 2, y: vy(v), width: w, height: 225 - vy(v), 'class': up ? 'up' : 'down' });
});
// projected volume of the current day
add(vPane, 'rect', { x: x(87) - 5.2, y: vy(747), width: 10.4, height: 14, fill: '#fff', stroke: '#e5c03a', 'stroke-width': 2 });
line(vPane, v1, vy, '#e5b93e');
line(vPane, v2, vy, '#b03ab0');
line(vPane, v3, vy, '#1b801b');

// bias
var b1 = [530,480,480,431,473,467,321,423,412,565,618,663,615,683,693,662,620,578,599,552,511,518,556,515,508,573,617,585,633,580,580,596,535,546,555,552,573,575,541,562,575,548,511,531,543,532,516,526,520,567,548,533,529,534,545,548,532,440,320,362,370,450,470,572,567,642,450,422,383,475,525,612,435,514,502,538,573,762,618,684,695,668,616,638,626,591,585,608];
var b2 = [500,435,435,378,417,400,212,306,278,447,510,575,566,680,743,743,726,697,720,670,590,577,595,545,504,558,619,590,645,604,625,653,587,598,598,589,600,592,558,578,597,566,525,545,554,536,507,513,508,555,536,522,520,528,542,545,525,420,278,292,265,324,321,426,441,555,378,368,346,432,473,546,353,443,441,490,540,750,635,728,765,771,748,768,768,726,699,705];
var b3 = [541,473,458,387,407,374,157,228,173,330,390,448,434,553,635,653,648,634,690,673,625,631,666,627,606,668,720,692,743,699,705,724,649,653,648,643,653,651,616,637,656,627,582,593,602,578,547,543,530,565,541,518,516,521,534,534,510,400,238,240,200,241,221,320,330,440,238,206,160,248,297,387,185,290,298,355,412,642,536,655,733,758,753,785,812,795,798,830];
var bPane = document.getElementById('bias');
var by = scale(157, 830, 224);
line(bPane, b1, by, '#222');
line(bPane, b2, by, '#e0bf40');
line(bPane, b3, by, '#b83cb8');

// date ticks, the first two fade in
var ticks = document.getElementById('ticks');
for (var i = 12; i < 88; i++) {
    var major = i % 30 === 27;
    add(ticks, 'path', {
        d: 'M' + x(i) + ' 1V' + (major ? 14 : 8),
        stroke: major ? '#555' : i < 14 ? '#ccc' : '#888',
        'stroke-width': major ? 2.4 : 1.6
    });
}
```
